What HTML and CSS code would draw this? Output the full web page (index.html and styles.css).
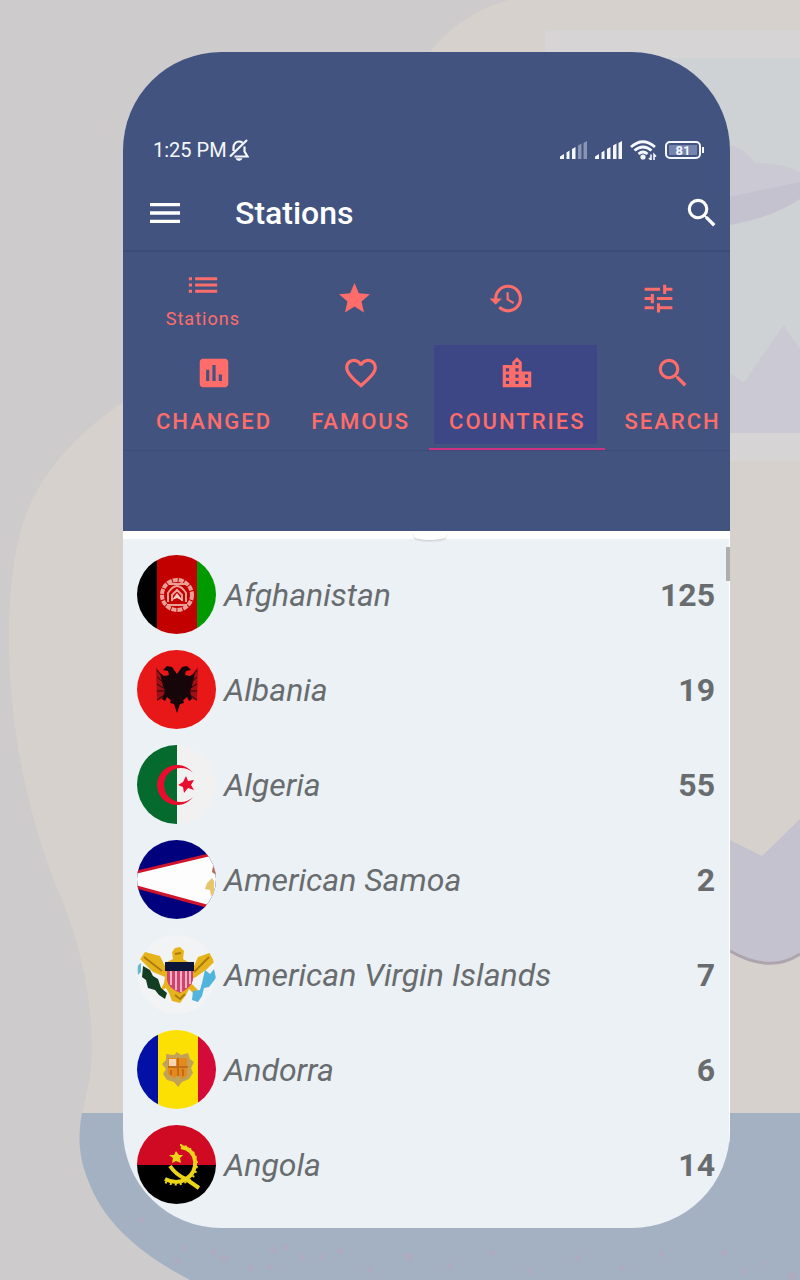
FILE: index.html
```html
<!DOCTYPE html>
<html lang="en">
  <head>
    <meta charset="UTF-8" />
    <meta name="viewport" content="width=device-width, initial-scale=1.0" />
    <title>Stations - Countries</title>
    <link rel="stylesheet" href="styles.css">
  </head>
  <body>
    <!-- Background illustration -->
    <svg class="backdrop" viewBox="0 0 800 1280" preserveAspectRatio="xMidYMin slice" aria-hidden="true">
      <path fill="#d6d1cc" d="M508 0C470 12 445 32 430 52L300 300L123 402C85 428 43 466 24 520C8 568 6 640 12 700C18 770 38 845 62 900C82 950 92 1000 92 1050C92 1075 86 1095 82 1113L800 1113V0Z" />
      <path fill="#d6d4d5" d="M545 30H800V461H545Z" />
      <path fill="#cfd2d4" d="M545 58H800V433H545Z" />
      <path fill="#cbc9d4" d="M700 145Q740 138 755 163Q785 163 800 172V183L700 205Z" />
      <path fill="#c5c2d0" d="M700 203L800 182V199Q765 223 700 229Z" />
      <path fill="#cbc9d4" d="M700 355L744 382L784 325L800 350V433H700Z" />
      <path fill="#c5c2d0" d="M700 825L762 856L800 819V954Q770 974 730 951L700 935Z" />
      <path fill="none" stroke="#aea4ad" stroke-width="3" d="M700 935L730 951Q770 974 800 954" />
      <path fill="#a4b1c3" d="M82 1113H800V1280H190C140 1254 103 1222 88 1180C78 1155 78 1135 82 1113Z" />
      <g fill="#aeabbf">
        <circle cx="141" cy="1220" r="3" /><circle cx="183" cy="1248" r="3" /><circle cx="177" cy="1261" r="3" />
        <circle cx="224" cy="1259" r="4" /><circle cx="214" cy="1252" r="3" /><circle cx="250" cy="1268" r="3" />
        <circle cx="273" cy="1250" r="3" /><circle cx="285" cy="1247" r="3" /><circle cx="302" cy="1257" r="3" />
        <circle cx="322" cy="1257" r="3" /><circle cx="340" cy="1251" r="3" /><circle cx="370" cy="1270" r="3" />
        <circle cx="409" cy="1257" r="4" /><circle cx="450" cy="1266" r="3" /><circle cx="492" cy="1253" r="3" />
        <circle cx="530" cy="1271" r="3" /><circle cx="578" cy="1258" r="3" /><circle cx="622" cy="1268" r="3" />
        <circle cx="662" cy="1254" r="3" /><circle cx="724" cy="1253" r="3" /><circle cx="744" cy="1271" r="3" />
        <circle cx="764" cy="1263" r="2" /><circle cx="792" cy="1276" r="4" /><circle cx="270" cy="1267" r="3" />
      </g>
    </svg>

    <main class="phone">
      <header class="header">
        <!-- Status bar -->
        <div class="status-bar">
          <span class="time">1:25 PM</span>
          <svg class="bell" viewBox="0 0 20 22" width="20" height="22" aria-hidden="true">
            <path fill="none" stroke="currentColor" stroke-width="2.200" d="M4.500 12V8.500C4.500 5 7 2.500 10 2.500C11.500 2.500 12.500 2.900 13.500 3.700M15.500 7.500V12.500L18.500 17.500H5.500M1 17.500L18 1" />
            <path fill="currentColor" d="M6.500 19.200H13.500Q12.500 22 10 22Q7.500 22 6.500 19.200Z" />
          </svg>
          <div class="status-icons">
            <svg viewBox="0 0 27 18" width="27" height="18" fill="currentColor" aria-hidden="true">
              <path d="M0 18V15.500L4 13V18ZM6.500 18V11.500L9.500 9.500V18ZM12 18V8L15.500 6V18Z" />
              <path opacity=".4" d="M18 18V4.500L21.500 2.500V18ZM23.500 18V2L27 0V18Z" />
            </svg>
            <svg viewBox="0 0 27 18" width="27" height="18" fill="currentColor" aria-hidden="true">
              <path d="M0 18V15.500L4 13V18ZM6.500 18V11.500L9.500 9.500V18ZM12 18V8L15.500 6V18ZM18 18V4.500L21.500 2.500V18ZM23.500 18V2L27 0V18Z" />
            </svg>
            <svg viewBox="0 0 27 20" width="27" height="20" aria-hidden="true">
              <g fill="none" stroke="currentColor" stroke-width="2.800">
                <path d="M1 7Q13 -3.500 25 7" />
                <path d="M4.500 10.500Q13 3.500 21.500 10.500" />
                <path d="M8.500 14Q13 10 17.500 14" />
              </g>
              <circle cx="13" cy="17" r="2.600" fill="currentColor" />
              <path fill="none" stroke="currentColor" stroke-width="1.600" d="M21 14.500V20L19 18M24 20V14.500L26 16.500" />
            </svg>
            <div class="battery"><span class="battery-level">81</span></div>
          </div>
        </div>

        <!-- App bar -->
        <div class="app-bar">
          <button type="button" class="icon-button" aria-label="Open menu">
            <svg viewBox="0 0 24 24" width="40" height="40" fill="currentColor"><path d="M3 18h18v-2H3v2zm0-5h18v-2H3v2zm0-7v2h18V6H3z" /></svg>
          </button>
          <h1>Stations</h1>
          <button type="button" class="icon-button" aria-label="Search">
            <svg viewBox="0 0 24 24" width="38" height="38" fill="currentColor"><path d="M15.500 14h-.79l-.28-.27A6.471 6.471 0 0 0 16 9.500 6.500 6.500 0 1 0 9.500 16c1.610 0 3.090-.59 4.230-1.570l.27.28v.79l5 4.990L20.490 19l-4.990-5zm-6 0C7.010 14 5 11.990 5 9.500S7.010 5 9.500 5 14 7.010 14 9.500 11.990 14 9.500 14z" /></svg>
          </button>
        </div>

        <!-- Main navigation -->
        <nav class="main-nav">
          <button type="button" class="nav-item active">
            <svg viewBox="0 5 24 14" width="38" height="22" fill="currentColor" aria-hidden="true"><path d="M3 13h2v-2H3v2zm0 4h2v-2H3v2zm0-8h2V7H3v2zm4 4h14v-2H7v2zm0 4h14v-2H7v2zM7 7v2h14V7H7z" /></svg>
            <span>Stations</span>
          </button>
          <button type="button" class="nav-item" aria-label="Favourites">
            <svg viewBox="0 0 24 24" width="37" height="37" fill="currentColor"><path d="M12 17.270L18.180 21l-1.640-7.030L22 9.240l-7.190-.61L12 2 9.190 8.630 2 9.240l5.460 4.730L5.820 21z" /></svg>
          </button>
          <button type="button" class="nav-item" aria-label="History">
            <svg viewBox="0 0 24 24" width="37" height="37" fill="currentColor"><path d="M13 3a9 9 0 0 0-9 9H1l3.890 3.890.07.14L9 12H6c0-3.870 3.130-7 7-7s7 3.130 7 7-3.130 7-7 7c-1.930 0-3.680-.79-4.940-2.060l-1.420 1.420A8.954 8.954 0 0 0 13 21a9 9 0 0 0 0-18zm-1 5v5l4.280 2.540.72-1.210-3.500-2.080V8H12z" /></svg>
          </button>
          <button type="button" class="nav-item" aria-label="Settings">
            <svg viewBox="0 0 24 24" width="37" height="37" fill="currentColor"><path d="M3 17v2h6v-2H3zM3 5v2h10V5H3zm10 16v-2h8v-2h-8v-2h-2v6h2zM7 9v2H3v2h4v2h2V9H7zm14 4v-2H11v2h10zm-6-4h2V7h4V5h-4V3h-2v6z" /></svg>
          </button>
        </nav>

        <!-- Tabs -->
        <div class="tabs" role="tablist">
          <button type="button" class="tab" role="tab">
            <svg viewBox="0 0 24 24" width="38" height="38" fill="currentColor" aria-hidden="true"><path d="M19 3H5c-1.100 0-2 .9-2 2v14c0 1.100.9 2 2 2h14c1.100 0 2-.9 2-2V5c0-1.100-.9-2-2-2zM9 17H7v-7h2v7zm4 0h-2V7h2v10zm4 0h-2v-4h2v4z" /></svg>
            CHANGED
          </button>
          <button type="button" class="tab" role="tab">
            <svg viewBox="0 0 24 24" width="38" height="38" fill="currentColor" aria-hidden="true"><path d="M16.500 3c-1.740 0-3.410.81-4.500 2.090C10.910 3.810 9.240 3 7.500 3 4.420 3 2 5.420 2 8.500c0 3.780 3.400 6.860 8.550 11.540L12 21.350l1.450-1.320C18.600 15.360 22 12.280 22 8.500 22 5.420 19.580 3 16.500 3zm-4.400 15.550l-.1.100-.1-.1C7.140 14.240 4 11.390 4 8.500 4 6.500 5.500 5 7.500 5c1.540 0 3.040.99 3.570 2.360h1.870C13.460 5.990 14.960 5 16.500 5c2 0 3.500 1.500 3.500 3.500 0 2.890-3.140 5.740-7.900 10.050z" /></svg>
            FAMOUS
          </button>
          <button type="button" class="tab active" role="tab" aria-selected="true">
            <svg viewBox="0 0 24 24" width="38" height="38" fill="currentColor" aria-hidden="true"><path d="M15 11V5l-3-3-3 3v2H3v14h18V11h-6zm-8 8H5v-2h2v2zm0-4H5v-2h2v2zm0-4H5V9h2v2zm6 8h-2v-2h2v2zm0-4h-2v-2h2v2zm0-4h-2V9h2v2zm0-4h-2V5h2v2zm6 12h-2v-2h2v2zm0-4h-2v-2h2v2z" /></svg>
            COUNTRIES
          </button>
          <button type="button" class="tab" role="tab">
            <svg viewBox="0 0 24 24" width="38" height="38" fill="currentColor" aria-hidden="true"><path d="M15.500 14h-.79l-.28-.27A6.471 6.471 0 0 0 16 9.500 6.500 6.500 0 1 0 9.500 16c1.610 0 3.090-.59 4.230-1.570l.27.28v.79l5 4.990L20.490 19l-4.990-5zm-6 0C7.010 14 5 11.990 5 9.500S7.010 5 9.500 5 14 7.010 14 9.500 11.990 14 9.500 14z" /></svg>
            SEARCH
          </button>
        </div>
      </header>

      <!-- Country list -->
      <section class="countries">
        <ul class="country-list">
          <li>
            <a href="#" class="country">
              <svg class="flag" viewBox="0 0 79 79" aria-hidden="true">
                <path d="M0 0H20V79H0Z" />
                <path fill="#c30000" d="M20 0H60V79H20Z" />
                <path fill="#009a00" d="M60 0H79V79H60Z" />
                <g fill="none" stroke="#eaa097">
                  <circle cx="40" cy="40" r="15" stroke-width="4" stroke-dasharray="5 1" />
                  <path stroke-width="2" d="M31 47V38Q40 24 49 38V47M35 46V40L40 35L45 40V46M30 50H50M32 29H48" />
                </g>
                <path fill="#f4cdc4" d="M35 45L40 38L46 46L40 43Z" />
              </svg>
              <span class="name">Afghanistan</span>
              <span class="count">125</span>
            </a>
          </li>
          <li>
            <a href="#" class="country">
              <svg class="flag" viewBox="0 0 79 79" aria-hidden="true">
                <path fill="#e81818" d="M0 0H79V79H0Z" />
                <path fill="#9d1015" d="M19 17L26 27H53L61 17L60 51L50 47L40 57L30 47L20 51Z" />
                <path fill="#16060a" d="M40 24L35 17L30 16L26 20L31 21L32 25L27 26L23 23L24 27L26 36L28 41L25 49L28 51L30 47L34 50L33 53L37 54L40 63L43 54L47 53L46 50L50 47L52 51L55 49L53 41L55 36L57 27L58 23L53 26L48 25L49 21L54 20L50 16L45 17Z" />
                <path stroke="#24070a" fill="none" d="M20 20L28 30M20 27L28 34M20 34L28 39M20 41L29 41M20 50L30 43M60 20L52 30M60 27L52 34M60 34L52 39M60 41L51 41M60 50L50 43" />
              </svg>
              <span class="name">Albania</span>
              <span class="count">19</span>
            </a>
          </li>
          <li>
            <a href="#" class="country">
              <svg class="flag" viewBox="0 0 79 79" aria-hidden="true">
                <path fill="#046a2e" d="M0 0H40V79H0Z" />
                <path fill="#f1f1f2" d="M40 0H79V79H40Z" />
                <path fill="#e80d2c" d="M56 28A20 20 0 1 0 56 52A17 17 0 1 1 56 28Z" />
                <path fill="#e80d2c" d="M49 31L51 36L57 35L54 40L57 45L51 43L47 48L46 42L41 40L46 37Z" />
              </svg>
              <span class="name">Algeria</span>
              <span class="count">55</span>
            </a>
          </li>
          <li>
            <a href="#" class="country">
              <svg class="flag" viewBox="0 0 79 79" aria-hidden="true">
                <path fill="#01017e" d="M0 0H79V79H0Z" />
                <path fill="#fdfdfd" stroke="#d0142c" stroke-width="3" d="M-4 33L84 12V70L-4 46Z" />
                <path fill="#e8c66c" d="M70 43L75 38L77 41V54L74 56L73 50L68 49Z" />
                <path fill="#b56d59" d="M76 26L79 31V35L75 32Z" />
              </svg>
              <span class="name">American Samoa</span>
              <span class="count">2</span>
            </a>
          </li>
          <li>
            <a href="#" class="country">
              <svg class="flag" viewBox="0 0 79 79" aria-hidden="true">
                <path fill="#f2f3f4" d="M0 0H79V79H0Z" />
                <path fill="#e5b41c" d="M35 17L38 13L43 12L47 16L46 24L51 27V34L57 31L61 22L75 17L79 25L70 34L59 42L55 44V49L61 55L56 58L52 54L49 60L43 68L35 66L32 58L29 53L23 56L27 48L28 42L16 37L3 24L8 17L23 21L28 31L30 27L36 24Z" />
                <path fill="none" stroke="#ad7b0e" stroke-width="2" d="M7 22L25 36M72 22L57 37M38 60L43 64L48 59M38 19L44 18" />
                <path fill="#cf4370" d="M30 34H56V45Q54 53 43 58Q31 53 30 45Z" />
                <path stroke="#f6b2c2" stroke-width="2" d="M34 36V50M39 36V55M44 36V57M49 36V53M53 36V49" />
                <path fill="#0c1638" d="M28 27H57V36H28Z" />
                <path fill="#143e24" d="M6 31L13 35L16 41L21 44L24 53L30 58L28 64L22 60L18 55L11 53L9 45L5 42Z" />
                <path fill="#50b4dc" d="M68 35L73 39L77 34L79 43L72 52L67 53L65 61L61 67L55 65L56 56L63 55L65 48Z" />
                <path fill="#68b8ce" d="M0 31L4 28V37L1 40Z" />
              </svg>
              <span class="name">American Virgin Islands</span>
              <span class="count">7</span>
            </a>
          </li>
          <li>
            <a href="#" class="country">
              <svg class="flag" viewBox="0 0 79 79" aria-hidden="true">
                <path fill="#0310a5" d="M0 0H21V79H0Z" />
                <path fill="#fde003" d="M21 0H61V79H21Z" />
                <path fill="#d40a38" d="M61 0H79V79H61Z" />
                <path fill="#c2a258" d="M37 25L40 22L44 25L51 23L53 29L57 32L54 38L56 43L52 49L45 52L41 57L37 52L30 50L26 44L29 39L25 34L29 30V24Z" />
                <path fill="#e6891c" d="M31 28H50V45L46 49L41 45L37 48L31 44Z" />
                <path fill="#f4d6b5" d="M32 29H39V36H32Z" />
                <path stroke="#c26c17" stroke-width="2" d="M41 28V46M31 37H51M46 39V46M34 40V45" />
              </svg>
              <span class="name">Andorra</span>
              <span class="count">6</span>
            </a>
          </li>
          <li>
            <a href="#" class="country">
              <svg class="flag" viewBox="0 0 79 79" aria-hidden="true">
                <path fill="#d00a22" d="M0 0H79V40H0Z" />
                <path d="M0 40H79V79H0Z" />
                <g fill="none" stroke="#ecd419">
                  <path stroke-width="4" d="M44 22C62 25 62 47 49 54C43 58 36 58 28 54" />
                  <path stroke-width="2" stroke-dasharray="2 3" d="M43 20C64 22 64 50 51 56C43 61 35 60 28 57" />
                  <path stroke-width="4" d="M33 41Q39 50 49 54L62 63" />
                </g>
                <path fill="#ecd419" d="M39 26L42 30L46 30L43 33L44 38L39 36L35 38L36 33L32 30L37 30Z" />
              </svg>
              <span class="name">Angola</span>
              <span class="count">14</span>
            </a>
          </li>
        </ul>
      </section>
    </main>
  </body>
</html>
```
FILE: styles.css
```css
/* Global Styles */
* {
  box-sizing: border-box;
}

body {
  font-family: Roboto, sans-serif;
  background-color: #cdcbcb;
  margin: 0;
  padding: 52px 70px 52px 123px;
  position: relative;
}

button {
  font-family: inherit;
  color: inherit;
  background: none;
  border: none;
  margin: 0;
  padding: 0;
  cursor: pointer;
}

svg {
  display: block;
  flex-shrink: 0;
}

.backdrop {
  position: absolute;
  top: 0;
  left: 0;
  width: 100%;
  height: 100%;
  z-index: -1;
}

.phone {
  border-radius: 98px;
  overflow: hidden;
  background-color: #ebf1f4;
}

/* Header */
.header {
  background-color: #435380;
  color: #ff6d6a;
  padding: 82px 0 80px;
}

.status-bar {
  display: flex;
  align-items: center;
  height: 32px;
  padding: 0 26px 0 30px;
  color: #f5f8ff;
}

.time {
  font-size: 20px;
}

.bell {
  margin-left: 2px;
}

.status-icons {
  display: flex;
  align-items: center;
  gap: 8px;
  margin-left: auto;
}

.battery {
  position: relative;
  width: 36px;
  height: 18px;
  margin-right: 3px;
  padding: 2px;
  border: 2px solid #f5f8ff;
  border-radius: 5px;
}

.battery::after {
  content: "";
  position: absolute;
  top: 4px;
  right: -5px;
  width: 2px;
  height: 6px;
  background-color: #f5f8ff;
}

.battery-level {
  display: block;
  height: 10px;
  font-size: 13px;
  font-weight: bold;
  line-height: 11px;
  text-align: center;
  background-color: #7484ae;
}

.app-bar {
  display: flex;
  align-items: center;
  height: 86px;
  padding: 10px 9px 0 22px;
  border-bottom: 2px solid #3d4b78;
  color: white;
}

.app-bar h1 {
  flex: 1;
  margin: 0 0 0 50px;
  font-size: 32px;
  font-weight: 500;
}

/* Main navigation */
.main-nav {
  display: grid;
  grid-template-columns: repeat(4, 1fr);
  height: 93px;
  padding-left: 4px;
  margin-right: -4px;
}

.nav-item {
  display: flex;
  flex-direction: column;
  align-items: center;
  justify-content: center;
  gap: 12px;
  font-size: 18px;
  line-height: 22px;
  letter-spacing: 1px;
}

.nav-item.active {
  padding-top: 6px;
}

/* Tabs */
.tabs {
  display: flex;
  height: 106px;
  padding-left: 13px;
  border-bottom: 1px solid #3d4b78;
}

.tab {
  display: flex;
  flex-direction: column;
  align-items: center;
  flex-shrink: 0;
  gap: 16px;
  padding: 9px 19px 0 20px;
  font-size: 22px;
  font-weight: 500;
  line-height: 28px;
  letter-spacing: 2px;
}

.tab.active {
  position: relative;
  z-index: 0;
  border-bottom: 2px solid #cf3183;
}

.tab.active::before {
  content: "";
  position: absolute;
  inset: 0 8px 4px 5px;
  background-color: #3e4785;
  z-index: -1;
}

/* Country list */
.countries {
  position: relative;
  border-top: 8px solid white;
  border-right: 1px solid white;
  padding: 8px 14px 16px;
}

/* Bottom edge of the pull to refresh circle */
.countries::before {
  content: "";
  position: absolute;
  top: -6px;
  left: 50%;
  width: 32px;
  height: 7px;
  margin-left: -12px;
  border-radius: 0 0 50% 50%;
  background-color: white;
  box-shadow: 0 1px 2px #c4c7c9;
}

/* Scroll thumb */
.countries::after {
  content: "";
  position: absolute;
  top: 8px;
  right: -1px;
  width: 4px;
  height: 34px;
  background-color: #acaeaf;
}

.country-list {
  list-style: none;
  margin: 0;
  padding: 0;
}

.country {
  display: flex;
  align-items: center;
  gap: 8px;
  height: 95px;
  color: #696c6f;
  font-size: 32px;
  text-decoration: none;
}

.flag {
  width: 79px;
  height: 79px;
  border-radius: 50%;
}

.name {
  flex: 1;
  font-style: italic;
}

.count {
  font-weight: bold;
}
```
